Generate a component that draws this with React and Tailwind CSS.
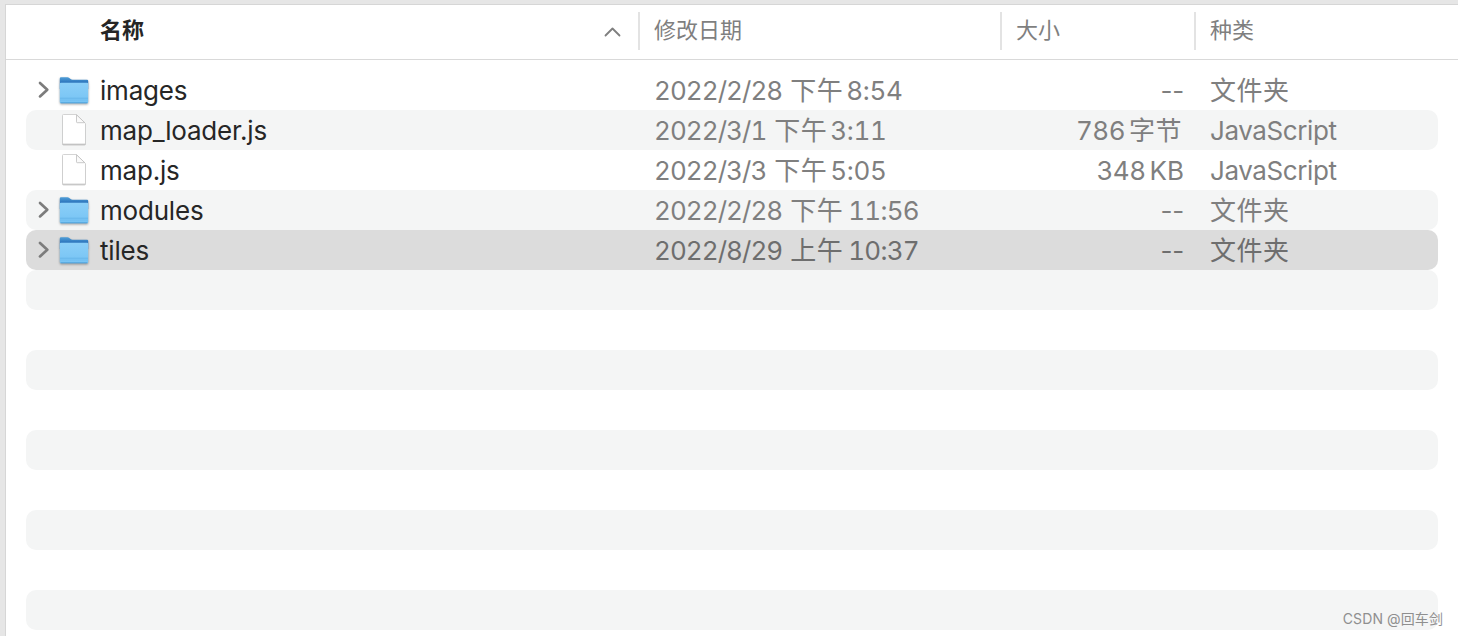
const files = [
  { name: 'images', folder: true, date: '2022/2/28', period: '下午', time: '8:54', size: '--', kind: '文件夹' },
  { name: 'map_loader.js', date: '2022/3/1', period: '下午', time: '3:11', size: '786', unit: '字节', kind: 'JavaScript' },
  { name: 'map.js', date: '2022/3/3', period: '下午', time: '5:05', size: '348', unit: 'KB', kind: 'JavaScript' },
  { name: 'modules', folder: true, date: '2022/2/28', period: '下午', time: '11:56', size: '--', kind: '文件夹' },
  { name: 'tiles', folder: true, selected: true, date: '2022/8/29', period: '上午', time: '10:37', size: '--', kind: '文件夹' }
];

const TOTAL_ROWS = 14;

const FolderIcon = () => (
  <svg width="32" height="32" viewBox="0 0 32 32" className="shrink-0 drop-shadow-[0_1px_1px_rgba(0,0,0,0.35)]">
    <defs>
      <linearGradient id="folderBack" x1="0" y1="0" x2="0" y2="1">
        <stop offset="0" stopColor="#4f9fd9" />
        <stop offset="0.4" stopColor="#3079bf" />
      </linearGradient>
      <linearGradient id="folderFront" x1="0" y1="0" x2="0" y2="1">
        <stop offset="0" stopColor="#8bcff8" />
        <stop offset="1" stopColor="#76c3f4" />
      </linearGradient>
    </defs>
    <path d="M1.8 4.5Q1.8 3.2 3 3.2H9.5Q10.5 3.2 11.3 4L12.5 5Q13.3 5.8 14.5 5.8H29Q30.2 5.8 30.2 7V15H1.8Z" fill="url(#folderBack)" />
    <path d="M1.8 10Q1.8 8.8 3 8.8H29Q30.2 8.8 30.2 10V28Q30.2 29.3 29 29.3H3Q1.8 29.3 1.8 28Z" fill="url(#folderFront)" />
    <path d="M2 24.2H30" stroke="#61b1e6" strokeWidth="0.8" />
    <path d="M2 26H30" stroke="#6ab9ec" strokeWidth="0.6" />
    <path d="M2.6 28.8H29.4" stroke="#4c9dd6" strokeWidth="0.9" />
  </svg>
);

const FileIcon = () => (
  <svg width="32" height="32" viewBox="0 0 32 32" className="shrink-0 drop-shadow-[0_1px_0.5px_rgba(0,0,0,0.22)]">
    <path d="M4.5 1.5Q4.5 0.5 5.5 0.5H18.5L27.5 9.5V29Q27.5 30 26.5 30H5.5Q4.5 30 4.5 29Z" fill="#fff" stroke="#c9c9c9" strokeWidth="0.8" />
    <path d="M18.5 0.8V7.8Q18.5 8.7 19.4 8.7H26.8Z" fill="#fafafa" stroke="#bdbdbd" strokeWidth="0.8" />
  </svg>
);

const DisclosureArrow = () => (
  <svg width="12" height="18" viewBox="0 0 12 18" className="shrink-0" fill="none" stroke="#7c7c7c" strokeWidth="2.7" strokeLinecap="round" strokeLinejoin="round">
    <path d="M2 2L9.3 8.7L2 15.4" />
  </svg>
);

const Row = ({ file, striped }) => {
  if (!file) {
    return <div className={`h-10 rounded-[10px] ${striped ? 'bg-[#f4f5f5]' : ''}`} />;
  }

  const background = file.selected ? 'bg-[#dcdcdc]' : striped ? 'bg-[#f4f5f5]' : '';
  const color = file.selected ? 'text-[#6e6e6e]' : 'text-[#7f7f7f]';

  return (
    <div className={`flex h-10 items-center rounded-[10px] text-[26px] leading-9 whitespace-nowrap ${background} ${color}`}>
      <div className="flex w-[628px] items-center">
        <div className="flex w-8 justify-start pl-3">{file.folder && <DisclosureArrow />}</div>
        {file.folder ? <FolderIcon /> : <FileIcon />}
        <span className="ml-2.5 pt-px tracking-[-0.2px] text-[#262626]">{file.name}</span>
      </div>
      <div className="flex w-[361px] pt-px tabular-nums">
        <span className="tracking-[-0.95px]">{file.date}</span>
        <span className="ml-2 tracking-[0.5px]">{file.period}</span>
        <span className={file.time.startsWith('1') ? 'ml-[5px] tracking-[-0.75px]' : 'ml-[3px] tracking-[-0.3px]'}>{file.time}</span>
      </div>
      <div className="flex w-[169px] justify-end gap-1 pt-px">
        <span className={file.unit ? 'tracking-[-0.5px] tabular-nums' : 'tracking-[-0.2px]'}>{file.size}</span>
        {file.unit && <span className={file.unit === 'KB' ? '' : 'mr-0.5 tracking-[0.5px]'}>{file.unit}</span>}
      </div>
      <div className={`ml-[26px] pt-px ${file.folder ? 'tracking-[0.5px]' : 'tracking-[-0.4px]'}`}>{file.kind}</div>
    </div>
  );
};

export default function App() {
  return (
    <div className="relative flex h-[636px] w-[1458px] flex-col overflow-hidden border-t-4 border-t-[#e6e6e6] bg-[#e6e6e6] pl-[5px] font-['Inter','Noto_Sans_CJK_SC',sans-serif]">
      <div className="flex flex-1 flex-col border-t border-l border-[#d6d6d6] bg-white">
        {/* Column headers */}
        <div className="flex h-[55px] shrink-0 items-start border-b border-[#d9d9d9] pt-[7px] text-[22px] leading-9 text-[#7f7f7f]">
          <div className="flex w-[632px] items-center justify-between pr-[17px] pl-[94px]">
            <span className="font-bold text-[#262626]">名称</span>
            <svg width="17" height="12" viewBox="0 0 17 12" className="mt-1" fill="none" stroke="#7f7f7f" strokeWidth="1.8" strokeLinecap="round" strokeLinejoin="round">
              <path d="M1.5 9.5L8.5 2.5L15.5 9.5" />
            </svg>
          </div>
          <div className="h-[38px] w-[362px] border-l-2 border-[#e3e3e3] pl-3.5">修改日期</div>
          <div className="h-[38px] w-[194px] border-l-2 border-[#e3e3e3] pl-3.5">大小</div>
          <div className="h-[38px] border-l-2 border-[#e3e3e3] pl-3.5">种类</div>
        </div>

        {/* File list, stripes continue below the last entry */}
        <div className="pt-2.5 pr-5 pl-5">
          {Array.from({ length: TOTAL_ROWS }, (_, i) => (
            <Row key={i} file={files[i]} striped={i % 2 === 1} />
          ))}
        </div>
      </div>

      <div className="absolute right-[15px] bottom-[7px] text-sm leading-5 tracking-[0.1px] text-[#8f8f8f]">CSDN @回车剑</div>
    </div>
  );
}
